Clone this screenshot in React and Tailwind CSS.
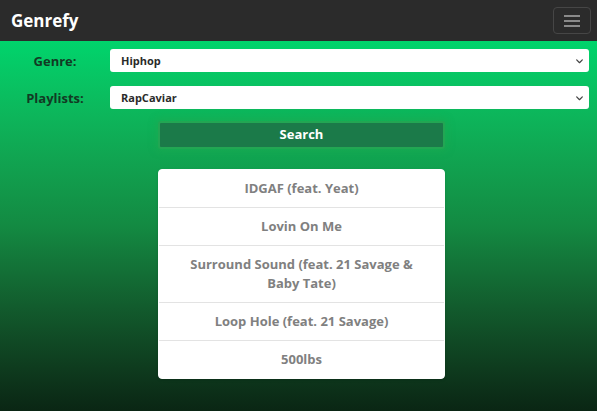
import React, { useState } from 'react';

const songs = [
    'IDGAF (feat. Yeat)',
    'Lovin On Me',
    'Surround Sound (feat. 21 Savage & Baby Tate)',
    'Loop Hole (feat. 21 Savage)',
    '500lbs'
];

const Chevron = () => (
    <svg className="pointer-events-none absolute right-[5px] top-1/2 -translate-y-1/2" width="9" height="9" viewBox="0 0 16 16" fill="none">
        <path d="M3 6l5 5 5-5" stroke="#444" strokeWidth="2.2" strokeLinecap="round" strokeLinejoin="round" />
    </svg>
);

const SelectRow = ({ label, value, options, onChange }) => (
    <div className="flex h-[23px] items-center">
        <label className="w-[110px] text-center text-[13px] font-bold leading-[16px] text-[#123a24]">{label}</label>
        <div className="relative h-[23px] flex-1">
            <select
                value={value}
                onChange={(e) => onChange(e.target.value)}
                className="block h-[23px] w-full appearance-none rounded-[3px] bg-white py-0 pl-[11px] text-[11px] font-bold leading-[14px] text-[#2a2a2a] outline-none"
            >
                {options.map((o) => (
                    <option key={o}>{o}</option>
                ))}
            </select>
            <Chevron />
        </div>
    </div>
);

const App = () => {
    const [genre, setGenre] = useState('Hiphop');
    const [playlist, setPlaylist] = useState('RapCaviar');

    return (
        <div className="flex h-[411px] flex-col overflow-hidden font-['Open_Sans',sans-serif]">
            <nav className="flex h-[41px] shrink-0 items-center justify-between bg-[#2b2b2b] pl-[11px] pr-[6px]">
                <span className="text-[17px] font-bold text-white">Genrefy</span>
                <button className="flex h-[27px] w-[38px] flex-col items-center justify-center gap-[3px] rounded-[4px] border border-[#464646]">
                    <span className="h-[2px] w-[16px] bg-[#8a8a8a]" />
                    <span className="h-[2px] w-[16px] bg-[#8a8a8a]" />
                    <span className="h-[2px] w-[16px] bg-[#8a8a8a]" />
                </button>
            </nav>

            <main className="flex-1 bg-gradient-to-b from-[#00d46c] via-[#138a42] to-[#0a2614] pt-[8px]">
                <div className="flex flex-col gap-[14px] pr-[8px]">
                    <SelectRow label="Genre:" value={genre} options={['Hiphop', 'Pop', 'Rock']} onChange={setGenre} />
                    <SelectRow label="Playlists:" value={playlist} options={['RapCaviar', 'Most Necessary']} onChange={setPlaylist} />
                </div>

                <div className="mt-[12px] flex justify-center pl-[6px]">
                    <div className="w-[287px]">
                        <button className="h-[28px] w-full rounded-[3px] border-[2px] border-[#22a653] bg-[#1b7a49] text-[13px] font-bold text-white shadow-[0_0_6px_3px_rgba(30,170,80,0.5)]">
                            Search
                        </button>
                        <ul className="mt-[20px] overflow-hidden rounded-[4px] border border-white bg-white shadow-sm">
                            {songs.map((s, i) => (
                                <li
                                    key={s}
                                    className={`px-[20px] py-[9px] text-center text-[13px] font-bold leading-[19px] text-[#808080] ${i > 0 ? 'border-t border-[#e3e3e3]' : ''}`}
                                >
                                    {s}
                                </li>
                            ))}
                        </ul>
                    </div>
                </div>
            </main>
        </div>
    );
};

export default App;
